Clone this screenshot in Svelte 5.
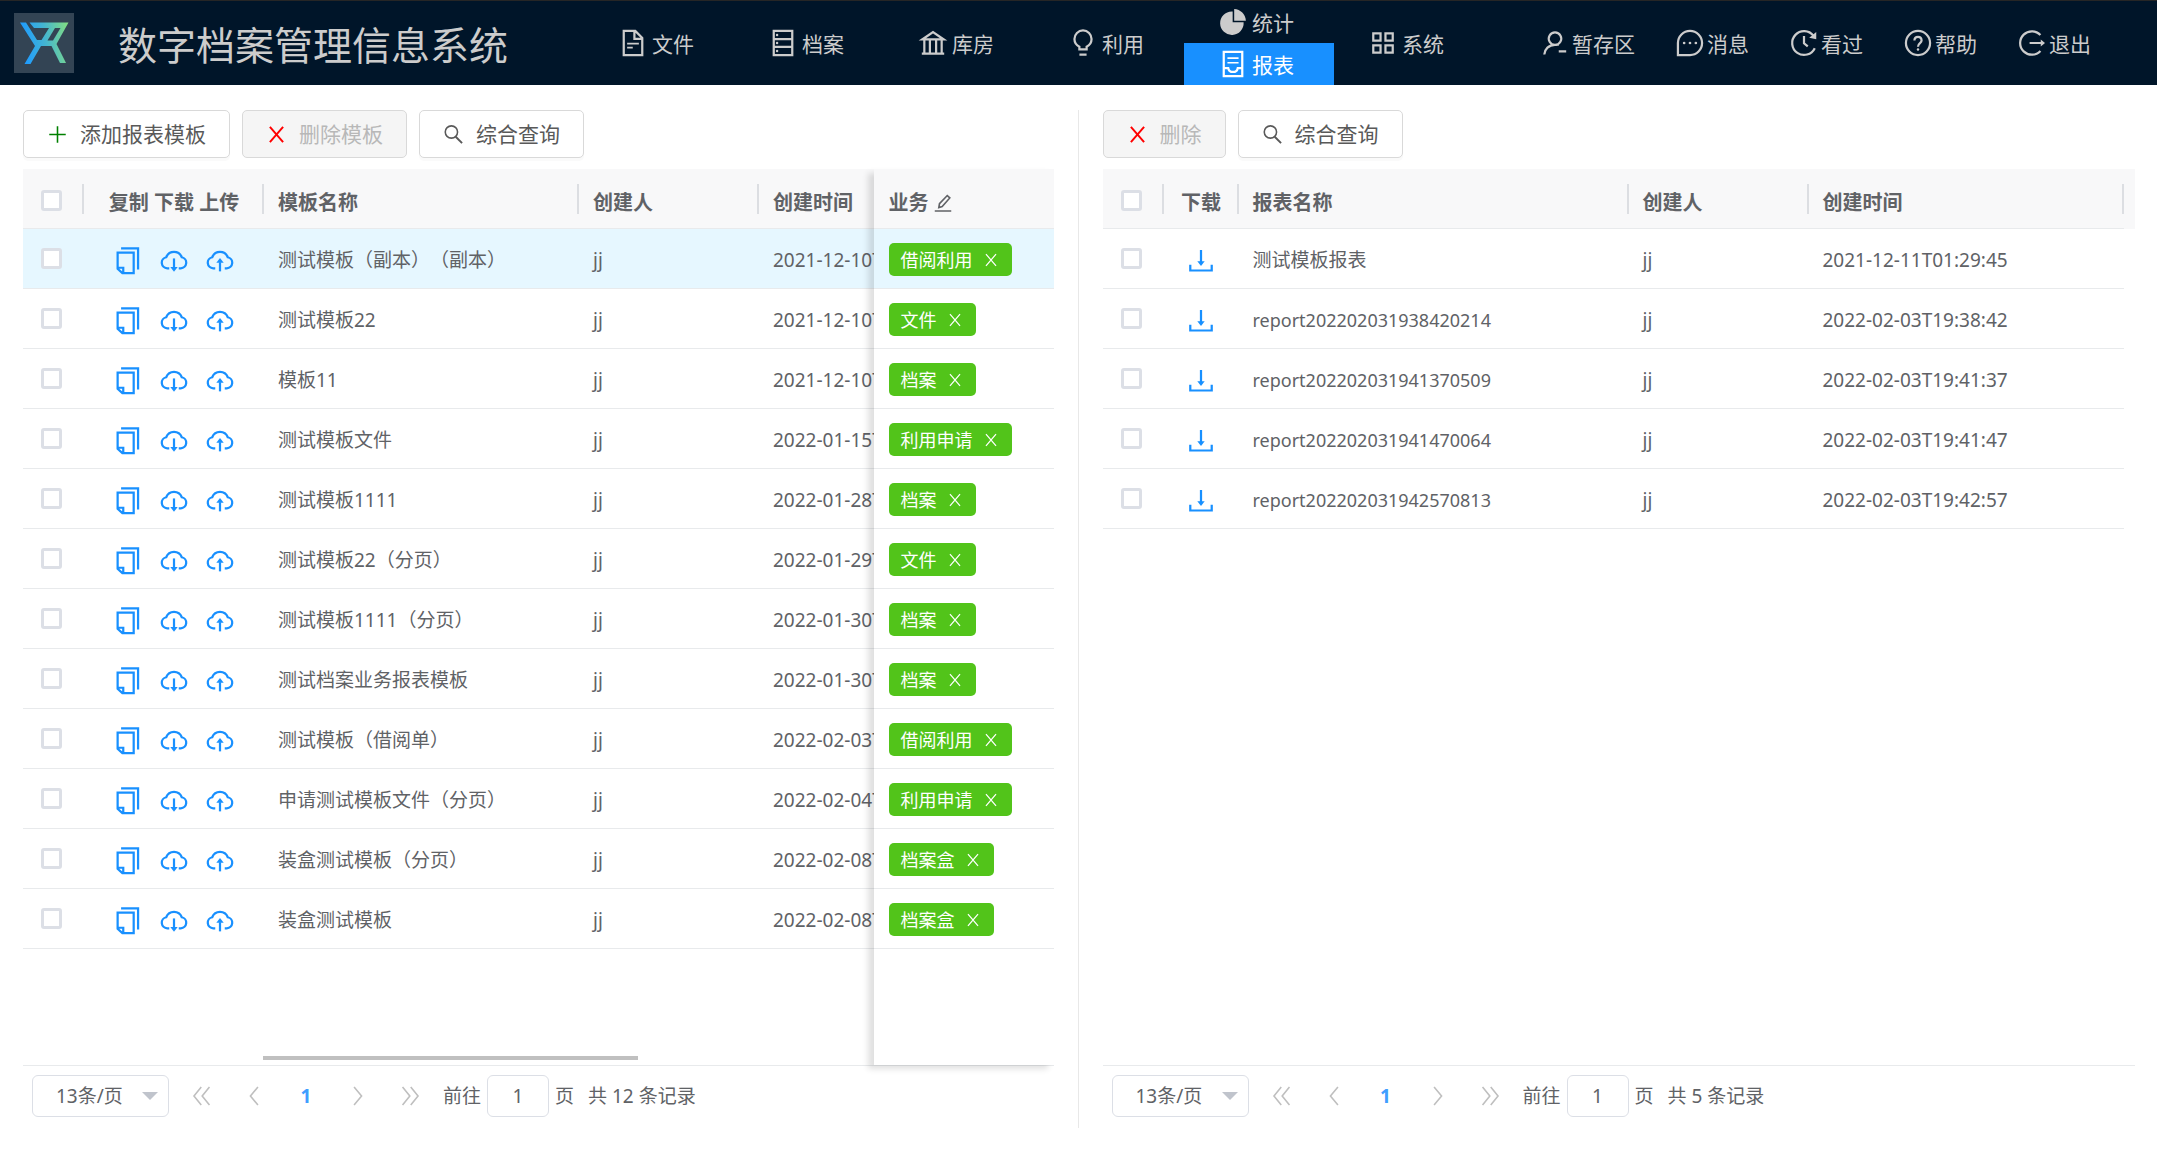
<script>
  const nav = [
    { icon: 'file', label: '文件' },
    { icon: 'archive', label: '档案' },
    { icon: 'bank', label: '库房' },
    { icon: 'bulb', label: '利用' },
  ];
  const stacked = [
    { icon: 'pie', label: '统计', active: false },
    { icon: 'report', label: '报表', active: true },
  ];
  const tools = [
    { icon: 'user', label: '暂存区' },
    { icon: 'message', label: '消息' },
    { icon: 'history', label: '看过' },
    { icon: 'help', label: '帮助' },
    { icon: 'logout', label: '退出' },
  ];

  const templates = [
    { name: '测试模板（副本）（副本）', by: 'jj', at: '2021-12-10T', tag: '借阅利用', selected: true },
    { name: '测试模板22', by: 'jj', at: '2021-12-10T', tag: '文件' },
    { name: '模板11', by: 'jj', at: '2021-12-10T', tag: '档案' },
    { name: '测试模板文件', by: 'jj', at: '2022-01-15T', tag: '利用申请' },
    { name: '测试模板1111', by: 'jj', at: '2022-01-28T', tag: '档案' },
    { name: '测试模板22（分页）', by: 'jj', at: '2022-01-29T', tag: '文件' },
    { name: '测试模板1111（分页）', by: 'jj', at: '2022-01-30T', tag: '档案' },
    { name: '测试档案业务报表模板', by: 'jj', at: '2022-01-30T', tag: '档案' },
    { name: '测试模板（借阅单）', by: 'jj', at: '2022-02-03T', tag: '借阅利用' },
    { name: '申请测试模板文件（分页）', by: 'jj', at: '2022-02-04T', tag: '利用申请' },
    { name: '装盒测试模板（分页）', by: 'jj', at: '2022-02-08T', tag: '档案盒' },
    { name: '装盒测试模板', by: 'jj', at: '2022-02-08T', tag: '档案盒' },
  ];

  const reports = [
    { name: '测试模板报表', by: 'jj', at: '2021-12-11T01:29:45' },
    { name: 'report202202031938420214', by: 'jj', at: '2022-02-03T19:38:42', latin: true },
    { name: 'report202202031941370509', by: 'jj', at: '2022-02-03T19:41:37', latin: true },
    { name: 'report202202031941470064', by: 'jj', at: '2022-02-03T19:41:47', latin: true },
    { name: 'report202202031942570813', by: 'jj', at: '2022-02-03T19:42:57', latin: true },
  ];
</script>

{#snippet icon(name)}
  <svg class="icon" viewBox="0 0 1024 1024" aria-hidden="true">
    {#if name === 'file'}
      <path d="M196 100H590L828 338V924H196Z M560 100V368H828" />
      <path class="thin" d="M312 530H712M312 670H504" />
    {:else if name === 'archive'}
      <path d="M196 100H828V924H196Z M196 376H828M196 648H828" />
      <g class="solid"><circle cx="310" cy="238" r="42" /><circle cx="310" cy="512" r="42" /><circle cx="310" cy="786" r="42" /></g>
    {:else if name === 'bank'}
      <path d="M144 392L512 138L880 392ZM216 392V850M406 392V850M618 392V850M808 392V850M130 872H894" />
    {:else if name === 'bulb'}
      <path d="M388 730V640C290 590 220 490 220 376a292 292 0 0 1 584 0C804 490 734 590 636 640V730ZM390 908H634" />
    {:else if name === 'pie'}
      <g class="solid">
        <path d="M500 150V524H874A401 401 0 1 1 472 150Z" />
        <path d="M552 72C770 84 940 254 952 472H552Z" />
      </g>
    {:else if name === 'report'}
      <path d="M196 100H828V924H196Z M196 654H350C370 750 430 784 512 784S654 750 674 654H828" />
      <path class="thin" d="M322 310H702M322 470H702" />
    {:else if name === 'apps'}
      <path d="M180 180H428V428H180ZM596 180H844V428H596ZM180 596H428V844H180ZM596 596H844V844H596Z" />
    {:else if name === 'user'}
      <path d="M512 574a212 212 0 1 1 0.1 0ZM512 574C300 574 160 720 146 904M640 574C590 568 560 574 512 574M640 796H894" />
    {:else if name === 'message'}
      <path d="M100 924V512A412 412 0 1 1 512 924Z" />
      <g class="solid"><circle cx="312" cy="512" r="46" /><circle cx="512" cy="512" r="46" /><circle cx="712" cy="512" r="46" /></g>
    {:else if name === 'history'}
      <path d="M834 262A406 406 0 1 0 880 690M512 270V520L640 630" />
      <path class="solid" d="M930 140V388L690 330Z" />
    {:else if name === 'help'}
      <circle cx="512" cy="512" r="412" />
      <path d="M390 430C390 350 440 300 512 300S634 350 634 425C634 520 512 510 512 640" />
      <circle class="solid" cx="512" cy="734" r="42" />
    {:else if name === 'logout'}
      <path d="M800 240A400 400 0 1 0 800 784M430 512H880" />
      <path class="solid" d="M810 392L956 512L810 632Z" />
    {:else if name === 'plus'}
      <path d="M512 110V914M110 512H914" />
    {:else if name === 'cross'}
      <path class="bold" d="M190 140L834 884M834 140L190 884" />
    {:else if name === 'search'}
      <circle cx="410" cy="390" r="300" />
      <path class="bold" d="M620 620L930 930" />
    {:else if name === 'edit'}
      <path d="M298 748L332 550L730 130L860 252L470 690ZM90 920H934" />
    {:else if name === 'copy'}
      <path d="M276 80H856V800M158 224H706V924H320L158 776ZM158 742H350V924" />
    {:else if name === 'cloud-down' || name === 'cloud-up'}
      <path d="M350 760H280A190 190 0 0 1 246 384A285 285 0 0 1 778 384A190 190 0 0 1 744 760H674" />
      {#if name === 'cloud-down'}
        <path d="M512 424V784" />
        <path class="solid" d="M386 720H638L512 880Z" />
      {:else}
        <path d="M512 554V866" />
        <path class="solid" d="M386 570H638L512 410Z" />
      {/if}
    {:else if name === 'download'}
      <path d="M512 140V560M146 640V836H878V640" />
      <path class="solid" d="M386 520H638L512 680Z" />
    {:else if name === 'left'}
      <path d="M680 130L360 512L680 894" />
    {:else if name === 'right'}
      <path d="M344 130L664 512L344 894" />
    {:else if name === 'first'}
      <path d="M480 130L170 512L480 894M830 130L520 512L830 894" />
    {:else if name === 'last'}
      <path d="M194 130L504 512L194 894M544 130L854 512L544 894" />
    {/if}
  </svg>
{/snippet}

{#snippet pager(id, total)}
  <footer class="pager">
    <div class="size">
      <select aria-label="每页条数" id="size-{id}"><option>13条/页</option></select>
      <svg class="caret" viewBox="0 0 16 8" aria-hidden="true"><path d="M0 0H16L8 8Z" /></svg>
    </div>
    <div class="pages">
      <button aria-label="首页">{@render icon('first')}</button>
      <button aria-label="上一页">{@render icon('left')}</button>
      <button class="current">1</button>
      <button aria-label="下一页">{@render icon('right')}</button>
      <button aria-label="末页">{@render icon('last')}</button>
    </div>
    <div class="jump">
      <label for="jump-{id}">前往</label>
      <input id="jump-{id}" type="text" value="1" />
      <span>页</span>
    </div>
    <span class="total">共 {total} 条记录</span>
  </footer>
{/snippet}

<div class="app">
  <header>
    <svg class="logo" viewBox="0 0 60 60" role="img" aria-label="logo">
      <defs>
        <linearGradient id="mark" gradientUnits="userSpaceOnUse" x1="8" y1="24" x2="54" y2="18">
          <stop offset="0" stop-color="#1e9bff" />
          <stop offset="0.5" stop-color="#45b5cf" />
          <stop offset="1" stop-color="#80dc84" />
        </linearGradient>
      </defs>
      <path class="plate" d="M0 0H60V60H0Z" />
      <path class="mark" d="M6 9.500H12L23 27H27.500L35 15H20L15.500 9.500H54.500L42.500 31L52 50H46L37.500 33H27L16.500 51H10.500L21 33Z" />
      <path class="notch" d="M41 15H46.500L39 27.500H33.500Z" />
    </svg>
    <h1>数字档案管理信息系统</h1>
    <nav class="main-nav">
      {#each nav as item}
        <a href="#{item.icon}">{@render icon(item.icon)}<span>{item.label}</span></a>
      {/each}
      <div class="stack">
        {#each stacked as item}
          <a href="#{item.icon}" class:active={item.active}>{@render icon(item.icon)}<span>{item.label}</span></a>
        {/each}
      </div>
      <a href="#apps">{@render icon('apps')}<span>系统</span></a>
    </nav>
    <nav class="tools">
      {#each tools as item}
        <a href="#{item.icon}">{@render icon(item.icon)}<span>{item.label}</span></a>
      {/each}
    </nav>
  </header>

  <main>
    <section class="pane left">
      <div class="toolbar">
        <button class="btn add">{@render icon('plus')}添加报表模板</button>
        <button class="btn del" disabled>{@render icon('cross')}删除模板</button>
        <button class="btn">{@render icon('search')}综合查询</button>
      </div>
      <div class="grid">
        <div class="scroller">
          <table class="wide">
            <colgroup><col class="c-check" /><col class="c-mid" /><col class="c-tname" /><col class="c-mid" /><col class="c-time" /></colgroup>
            <thead>
              <tr>
                <th><input type="checkbox" aria-label="全选" /></th>
                <th class="center">复制 下载 上传</th>
                <th>模板名称</th>
                <th>创建人</th>
                <th>创建时间</th>
              </tr>
            </thead>
            <tbody>
              {#each templates as row}
                <tr class:selected={row.selected}>
                  <td><input type="checkbox" aria-label="选择 {row.name}" /></td>
                  <td>
                    <div class="actions">
                      <button aria-label="复制">{@render icon('copy')}</button>
                      <button aria-label="下载">{@render icon('cloud-down')}</button>
                      <button aria-label="上传">{@render icon('cloud-up')}</button>
                    </div>
                  </td>
                  <td>{row.name}</td>
                  <td>{row.by}</td>
                  <td>{row.at}</td>
                </tr>
              {/each}
            </tbody>
          </table>
          <div class="scrollbar"></div>
        </div>
        <div class="pinned">
          <table>
            <thead>
              <tr><th><span class="with-icon">业务{@render icon('edit')}</span></th></tr>
            </thead>
            <tbody>
              {#each templates as row}
                <tr class:selected={row.selected}>
                  <td><span class="tag">{row.tag}<button aria-label="移除 {row.tag}">{@render icon('cross')}</button></span></td>
                </tr>
              {/each}
            </tbody>
          </table>
        </div>
      </div>
      {@render pager('templates', 12)}
    </section>

    <section class="pane right">
      <div class="toolbar">
        <button class="btn del" disabled>{@render icon('cross')}删除</button>
        <button class="btn">{@render icon('search')}综合查询</button>
      </div>
      <div class="grid">
        <div class="reports">
          <table>
            <colgroup><col class="c-check" /><col class="c-down" /><col class="c-rname" /><col class="c-mid" /><col /></colgroup>
            <thead>
              <tr>
                <th><input type="checkbox" aria-label="全选" /></th>
                <th class="center">下载</th>
                <th>报表名称</th>
                <th>创建人</th>
                <th>创建时间</th>
              </tr>
            </thead>
            <tbody>
              {#each reports as row}
                <tr>
                  <td><input type="checkbox" aria-label="选择 {row.name}" /></td>
                  <td><div class="actions"><button aria-label="下载">{@render icon('download')}</button></div></td>
                  <td class:latin={row.latin}>{row.name}</td>
                  <td>{row.by}</td>
                  <td>{row.at}</td>
                </tr>
              {/each}
            </tbody>
          </table>
          <div class="gutter"></div>
        </div>
      </div>
      {@render pager('reports', 5)}
    </section>
  </main>
</div>

<style>
  :global(body) {
    margin: 0;
    background: #fff;
  }
  .app {
    min-height: 100vh;
    display: flex;
    flex-direction: column;
    font-family: "Noto Sans", "Noto Sans CJK SC", sans-serif;
    font-size: 19px;
    line-height: 30px;
    color: #606266;
    text-spacing-trim: space-all;
  }
  .app * {
    box-sizing: border-box;
  }
  button,
  input,
  select {
    font: inherit;
    color: inherit;
  }
  button {
    display: flex;
    align-items: center;
    justify-content: center;
    padding: 0;
    border: 0;
    background: none;
    cursor: pointer;
  }

  .icon {
    display: block;
    flex: none;
    width: 30px;
    height: 30px;
    fill: none;
    stroke: currentColor;
    stroke-width: 76;
  }
  .icon .thin {
    stroke-width: 58;
  }
  .icon .bold {
    stroke-width: 96;
  }
  .icon .solid {
    fill: currentColor;
    stroke: none;
  }

  header {
    display: flex;
    align-items: center;
    height: 85px;
    padding: 0 66px 0 14px;
    border-top: 1px solid #262626;
    background: #001529;
    color: #ccc;
  }
  .logo {
    flex: none;
    width: 60px;
    height: 60px;
  }
  .plate,
  .notch {
    fill: #334454;
  }
  .mark {
    fill: url(#mark);
  }
  h1 {
    flex: none;
    margin: 0 76px 0 44px;
    padding-top: 4px;
    font-size: 39px;
    line-height: 60px;
    font-weight: 400;
  }
  header nav {
    display: flex;
    height: 100%;
    font-size: 21px;
  }
  header a {
    display: flex;
    align-items: center;
    color: inherit;
    text-decoration: none;
    white-space: nowrap;
  }
  header a span {
    padding-top: 2px;
  }
  .main-nav a {
    gap: 4px;
    width: 150px;
    padding-left: 34px;
  }
  .stack {
    display: grid;
    grid-template-rows: 1fr 1fr;
  }
  .stack .active {
    background: #1890ff;
    color: #fff;
  }
  .tools {
    gap: 40px;
    margin-left: auto;
  }
  .tools a {
    gap: 2px;
  }

  main {
    flex: 1;
    display: grid;
    grid-template-columns: 1fr 1fr;
    padding: 25px 0 24px;
  }
  .pane {
    display: flex;
    flex-direction: column;
    min-width: 0;
  }
  .left {
    padding: 0 24px 0 23px;
    border-right: 1px solid #e8e8e8;
  }
  .right {
    padding: 0 22px 0 24px;
  }
  .toolbar {
    display: flex;
    gap: 12px;
    margin-bottom: 11px;
  }
  .btn {
    gap: 12px;
    height: 48px;
    padding: 0 23px;
    border: 1px solid #d9d9d9;
    border-radius: 5px;
    background: #fff;
    box-shadow: 0 3px 0 #fafafa;
    font-size: 21px;
    color: #595959;
    white-space: nowrap;
  }
  .btn .icon {
    width: 21px;
    height: 21px;
  }
  .btn:disabled {
    background: #f5f5f5;
    box-shadow: none;
    color: #b8b8b8;
  }
  .add .icon {
    stroke: #008000;
  }
  .del .icon {
    stroke: #f00;
  }

  .grid {
    flex: 1;
    display: flex;
    min-height: 0;
    border-bottom: 1px solid #e8eaec;
  }
  .scroller {
    flex: 1;
    min-width: 0;
    display: flex;
    flex-direction: column;
    overflow: hidden;
  }
  .scrollbar {
    width: 375px;
    height: 4px;
    margin: auto 0 5px 240px;
    background: #c0c0c0;
  }
  .pinned {
    flex: none;
    width: 180px;
    background: #fff;
    box-shadow: -6px 4px 6px rgba(0, 0, 0, 0.12);
    position: relative;
  }
  .reports {
    flex: 1;
    display: flex;
    align-items: flex-start;
  }
  .gutter {
    flex: none;
    width: 11px;
    height: 60px;
    background: #f8f8f9;
  }
  table {
    flex: none;
    width: 100%;
    table-layout: fixed;
    border-collapse: separate;
    border-spacing: 0;
  }
  .reports table {
    flex: 1;
    width: auto;
    min-width: 0;
  }
  table.wide {
    width: 1051px;
  }
  .c-check {
    width: 61px;
  }
  .c-mid {
    width: 180px;
  }
  .c-tname {
    width: 315px;
  }
  .c-down {
    width: 75px;
  }
  .c-rname {
    width: 390px;
  }
  th,
  td {
    height: 60px;
    padding: 2px 14px 0;
    border-bottom: 1px solid #e8eaec;
    text-align: left;
    white-space: nowrap;
  }
  th {
    background: linear-gradient(#dcdee2, #dcdee2) right 15px / 2px 30px no-repeat #f8f8f9;
    padding-top: 8px;
    font-size: 20px;
    font-weight: 700;
  }
  td:first-child {
    padding: 0 0 0 18px;
  }
  th:first-child {
    padding: 4px 0 0 18px;
  }
  .pinned th {
    background: #f8f8f9;
    padding: 8px 0 0 15px;
  }
  .pinned td {
    padding: 2px 0 0 15px;
  }
  .center {
    padding-left: 0;
    padding-right: 0;
    text-align: center;
  }
  .selected td {
    background: #e6f7ff;
  }
  .latin {
    font-size: 18px;
  }
  th input,
  td input {
    display: block;
    appearance: none;
    width: 21px;
    height: 21px;
    margin: 0;
    border: 3px solid #dcdfe6;
    border-radius: 3px;
    background: #fff;
  }
  .actions {
    display: flex;
    justify-content: center;
    gap: 16px;
    padding-top: 2px;
    color: #1890ff;
  }
  .with-icon {
    display: flex;
    align-items: center;
    gap: 4px;
  }
  .with-icon .icon {
    width: 20px;
    height: 20px;
    stroke-width: 84;
  }
  .tag {
    display: inline-flex;
    align-items: center;
    gap: 9px;
    height: 33px;
    padding: 0 12px;
    border-radius: 5px;
    background: #52c41a;
    color: #fff;
    font-size: 18px;
    vertical-align: middle;
  }
  .tag .icon {
    width: 18px;
    height: 16px;
  }
  .tag .bold {
    stroke-width: 80;
  }

  .pager {
    display: flex;
    align-items: center;
    padding: 9px 0 11px 9px;
  }
  .size {
    position: relative;
    width: 137px;
  }
  select,
  .jump input {
    display: block;
    appearance: none;
    width: 100%;
    height: 42px;
    padding: 0 0 0 23px;
    border: 1px solid #dcdfe6;
    border-radius: 6px;
    background: #fff;
  }
  .caret {
    position: absolute;
    right: 11px;
    top: 17px;
    width: 16px;
    height: 8px;
    fill: #c0c4cc;
  }
  .pages {
    display: flex;
    gap: 22px;
    margin-left: 18px;
    color: #bfbfbf;
  }
  .pages button {
    width: 30px;
    height: 42px;
  }
  .pages .icon {
    width: 24px;
    height: 24px;
    stroke-width: 68;
  }
  .pages .current {
    color: #409eff;
    font-weight: 700;
  }
  .jump {
    display: flex;
    align-items: center;
    gap: 6px;
    margin-left: 18px;
  }
  .jump input {
    width: 62px;
    padding: 0;
    text-align: center;
  }
  .total {
    margin-left: 14px;
  }
</style>
